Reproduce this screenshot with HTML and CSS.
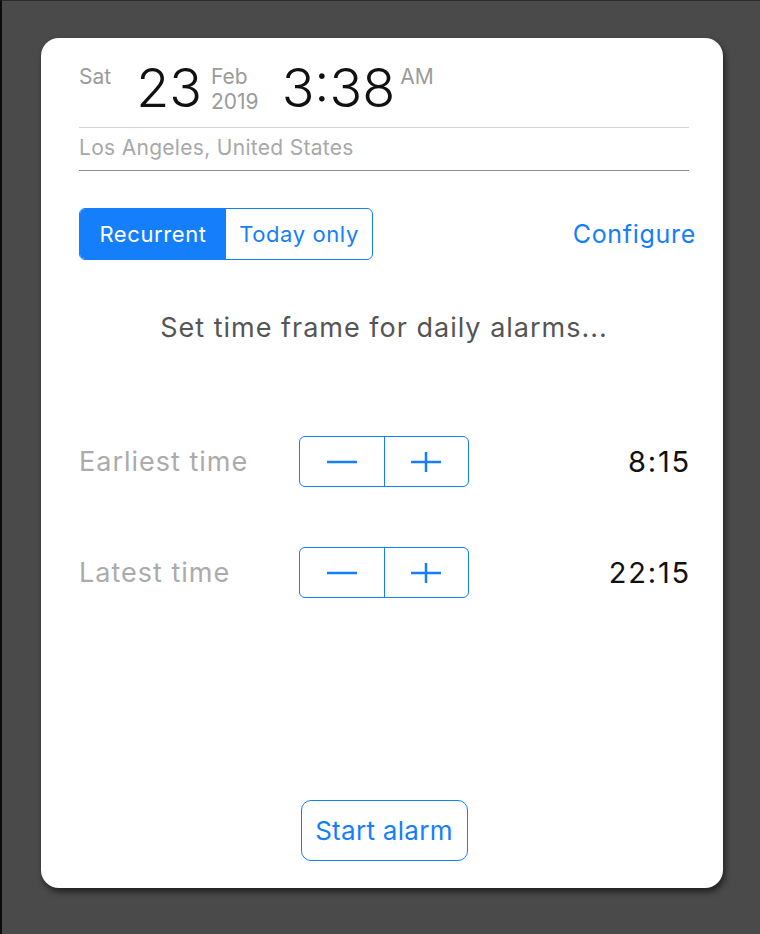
FILE: index.html
```html
<!DOCTYPE html>
<html lang="en">
<head>
    <meta charset="UTF-8">
    <meta name="viewport" content="width=device-width, initial-scale=1.0">
    <title>Daily Alarm</title>
    <link rel="stylesheet" href="styles.css">
</head>
<body>
    <div class="screen">
        <div class="card">
            <!-- Current date and time -->
            <div class="clock">
                <span class="day">Sat</span>
                <span class="big date">23</span>
                <span class="month">
                    <span>Feb</span>
                    <span>2019</span>
                </span>
                <span class="big time">3:38</span>
                <span class="ampm">AM</span>
            </div>
            <div class="rule light"></div>
            <div class="location">Los Angeles, United States</div>
            <div class="rule dark"></div>

            <!-- Mode selection -->
            <div class="mode-row">
                <div class="segmented">
                    <button class="segment active">Recurrent</button>
                    <button class="segment">Today only</button>
                </div>
                <button class="link-button">Configure</button>
            </div>

            <p class="hint">Set time frame for daily alarms...</p>

            <!-- Time frame steppers -->
            <div class="time-row first">
                <span class="label">Earliest time</span>
                <div class="stepper">
                    <button class="step minus"><svg width="32" height="22" viewBox="0 0 32 22"><path d="M1 11H31" /></svg></button>
                    <button class="step plus"><svg width="32" height="22" viewBox="0 0 32 22"><path d="M1 11H31M16 1V21" /></svg></button>
                </div>
                <span class="value">8:15</span>
            </div>
            <div class="time-row">
                <span class="label">Latest time</span>
                <div class="stepper">
                    <button class="step minus"><svg width="32" height="22" viewBox="0 0 32 22"><path d="M1 11H31" /></svg></button>
                    <button class="step plus"><svg width="32" height="22" viewBox="0 0 32 22"><path d="M1 11H31M16 1V21" /></svg></button>
                </div>
                <span class="value">22:15</span>
            </div>

            <div class="footer">
                <button class="start-button">Start alarm</button>
            </div>
        </div>
    </div>
</body>
</html>
```

FILE: styles.css
```css
/* Basic Styling */
* {
    box-sizing: border-box;
    margin: 0;
    padding: 0;
}
body {
    font-family: Inter, "Liberation Sans", sans-serif;
    background-color: #4a4a4a;
    color: #111;
}

button {
    font-family: inherit;
    background: none;
    border: none;
    cursor: pointer;
}

.screen {
    width: 760px;
    height: 934px;
    border-left: 2px solid #0c0c0c;
    border-top: 1px solid #2a2a2a;
    padding: 37px 0 0 39px;
}

/* White card */
.card {
    width: 682px;
    height: 850px;
    background-color: #fff;
    border-radius: 18px;
    box-shadow: 2px 4px 6px rgba(0, 0, 0, 0.55);
    padding: 22px 34px 27px 38px;
    display: flex;
    flex-direction: column;
}

/* Clock header */
.clock {
    display: flex;
    align-items: flex-start;
    height: 55px;
}

.day,
.ampm,
.month {
    font-size: 21px;
    line-height: 25px;
    color: #9b9b9b;
    margin-top: 4px;
}

.big {
    font-size: 54px;
    font-weight: 300;
    line-height: 55px;
}

.date {
    margin-left: 25px;
}

.month {
    display: flex;
    flex-direction: column;
    margin-left: 9px;
}

.time {
    margin-left: 23px;
}

.ampm {
    margin-left: 5px;
}

.rule {
    height: 1px;
}

.rule.light {
    margin-top: 12px;
    background-color: #d4d4d4;
}

.rule.dark {
    margin-top: 7px;
    background-color: #8e8e8e;
}

.location {
    margin-top: 5px;
    font-size: 21px;
    line-height: 30px;
    color: #a8a8a8;
    letter-spacing: 0.3px;
}

/* Mode row */
.mode-row {
    display: flex;
    align-items: center;
    justify-content: space-between;
    margin-top: 37px;
}

.segmented {
    display: flex;
    border: 1.5px solid #157efb;
    border-radius: 6px;
    overflow: hidden;
    height: 52px;
}

.segment {
    width: 146px;
    font-size: 22px;
    color: #157efb;
    letter-spacing: 0.6px;
}

.segment.active {
    background-color: #157efb;
    color: #fff;
}

.link-button {
    font-size: 25px;
    color: #157efb;
    margin-right: -7px;
    letter-spacing: 0.7px;
}

.hint {
    margin-top: 51px;
    text-align: center;
    font-size: 27px;
    line-height: 34px;
    color: #555;
    letter-spacing: 1px;
}

/* Stepper rows */
.time-row {
    display: flex;
    align-items: center;
    margin-top: 60px;
}

.time-row.first {
    margin-top: 91px;
}

.label {
    width: 220px;
    font-size: 27px;
    color: #ababab;
    letter-spacing: 1px;
}

.stepper {
    display: flex;
    width: 170px;
    height: 51px;
    border: 1.5px solid #157efb;
    border-radius: 6px;
}

.step {
    flex: 1;
    display: flex;
    align-items: center;
    justify-content: center;
}

.step.plus {
    border-left: 1.5px solid #157efb;
}

.step svg {
    stroke: #157efb;
    stroke-width: 2.5;
    fill: none;
}

.value {
    flex: 1;
    text-align: right;
    margin-right: -2px;
    font-size: 29px;
    letter-spacing: 1.8px;
}

/* Start button */
.footer {
    margin-top: auto;
    display: flex;
    justify-content: center;
}

.start-button {
    width: 167px;
    height: 61px;
    border: 1.5px solid #157efb;
    border-radius: 10px;
    font-size: 26px;
    color: #157efb;
    letter-spacing: 0.3px;
}
```
